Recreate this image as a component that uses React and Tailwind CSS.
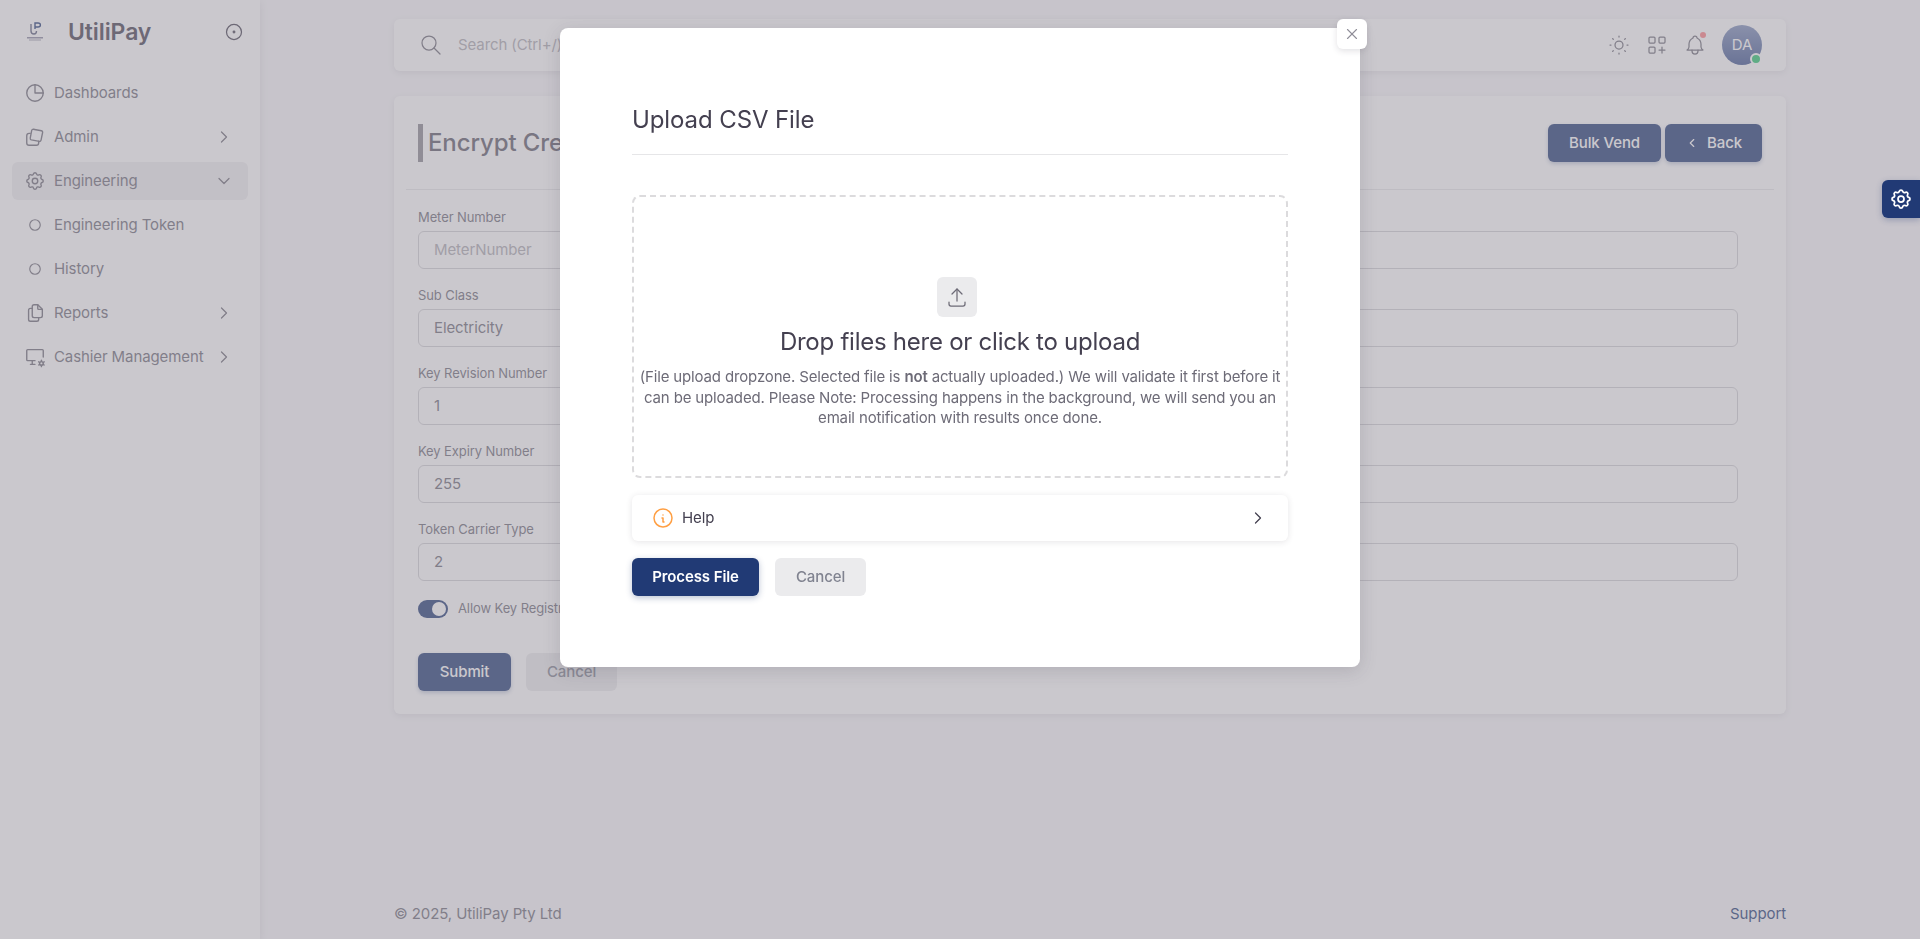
import React from "react";
import {
  TbChartPie2, TbSettings, TbFiles, TbDeviceDesktopCog, TbCircleDot, TbChevronRight, TbChevronDown, TbCircle,
  TbSearch, TbSun, TbLayoutGridAdd, TbBell, TbUpload, TbInfoCircle, TbX, TbChevronLeft,
} from "react-icons/tb";

const AdminIcon = ({ className }) => (
  <svg className={className} viewBox="0 0 24 24" fill="none" stroke="currentColor" strokeWidth="1.5" strokeLinecap="round" strokeLinejoin="round">
    <path d="M10 3.5l9 1.7c.9.2 1.5 1 1.3 1.9l-1.7 8.4c-.2.9-1 1.5-1.9 1.3l-8.6-1.6c-.9-.2-1.5-1-1.3-1.9l1.6-8.5c.2-.9 1.1-1.5 2.6-1.3z" />
    <path d="M6.8 8H5.5C4.1 8 3 9.1 3 10.5v8C3 19.9 4.1 21 5.5 21h8c1.4 0 2.5-1.1 2.5-2.5v-1.8" />
  </svg>
);

const Logo = () => (
  <svg className="w-[18px] h-[20px]" viewBox="0 0 18 20" fill="none">
    <path d="M5 2v7c0 2 1 3 3 3s2.5-1 2.5-3" stroke="#5a5f7d" strokeWidth="1.4" />
    <path d="M9 7V1h3c1.6 0 2.4 1 2.4 2s-.8 2-2.4 2H9" stroke="#213a75" strokeWidth="1.4" />
    <rect x="1" y="15" width="16" height="1.5" fill="#8a89a0" />
    <rect x="3" y="17.5" width="12" height="1" fill="#a09fb0" />
  </svg>
);

const menu = [
  { label: "Dashboards", Icon: TbChartPie2 },
  { label: "Admin", Icon: AdminIcon, arrow: "right" },
  { label: "Engineering", Icon: TbSettings, arrow: "down", active: true },
  { label: "Engineering Token", sub: true },
  { label: "History", sub: true },
  { label: "Reports", Icon: TbFiles, arrow: "right" },
  { label: "Cashier Management", Icon: TbDeviceDesktopCog, arrow: "right" },
];

const fields = [
  { label: "Meter Number", placeholder: "MeterNumber" },
  { label: "Sub Class", value: "Electricity" },
  { label: "Key Revision Number", value: "1" },
  { label: "Key Expiry Number", value: "255" },
  { label: "Token Carrier Type", value: "2" },
];

const Sidebar = () => (
  <aside className="w-[260px] shrink-0 bg-white shadow-[0_2px_8px_rgba(47,43,61,0.12)] h-full">
    <div className="flex items-center h-[64px] pl-[26px] pr-[16px]">
      <Logo />
      <span className="ml-[24px] text-[23px] font-semibold text-[#444050] flex-1">UtiliPay</span>
      <TbCircleDot className="w-[20px] h-[20px] text-[#444050]" strokeWidth={1.5} />
    </div>
    <nav className="flex flex-col gap-[6px] px-[12px] pt-[10px]">
      {menu.map(({ label, Icon, arrow, active, sub }) => (
        <div key={label} className={`flex items-center h-[38px] rounded-md pl-[14px] pr-[14px] text-[15px] text-[#6d6b77] ${active ? "bg-[#efeef0]" : ""}`}>
          <span className="w-[18px] flex justify-center mr-[10px]">
            {sub ? <TbCircle className="w-[14px] h-[14px]" /> : <Icon className="w-[22px] h-[22px] shrink-0" strokeWidth={1.5} />}
          </span>
          <span className="flex-1 whitespace-nowrap">{label}</span>
          {arrow === "right" && <TbChevronRight className="w-[20px] h-[20px]" strokeWidth={1.5} />}
          {arrow === "down" && <TbChevronDown className="w-[20px] h-[20px]" strokeWidth={1.5} />}
        </div>
      ))}
    </nav>
  </aside>
);

const Topbar = () => (
  <header className="h-[52px] rounded-md bg-white shadow-[0_2px_6px_rgba(47,43,61,0.1)] flex items-center pl-[25px] pr-[24px]">
    <TbSearch className="w-[24px] h-[24px] text-[#6d6b77]" strokeWidth={1.25} />
    <span className="ml-[15px] text-[15px] text-[#acaab1] flex-1">Search (Ctrl+/)</span>
    <TbSun className="w-[24px] h-[24px] text-[#6d6b77] mr-[14px]" strokeWidth={1.25} />
    <TbLayoutGridAdd className="w-[24px] h-[24px] text-[#6d6b77] mr-[14px]" strokeWidth={1.25} />
    <span className="relative mr-[15px]">
      <TbBell className="w-[24px] h-[24px] text-[#6d6b77]" strokeWidth={1.25} />
      <span className="absolute -top-[1px] right-[1px] w-[6px] h-[6px] rounded-full bg-[#ff4c51]/70" />
    </span>
    <span className="relative w-[40px] h-[40px] rounded-full bg-gradient-to-b from-[#7f90ba] to-[#3f5590] text-white text-[15px] flex items-center justify-center">
      DA
      <span className="absolute bottom-0 right-0 w-[12px] h-[12px] rounded-full bg-[#28c76f] border-2 border-white" />
    </span>
  </header>
);

const Field = ({ label, placeholder, value }) => (
  <div>
    <label className="block text-[13px] leading-[18px] h-[18px] text-[#6d6b77] mb-[5px]">{label}</label>
    <div className={`h-[38px] rounded-md border border-[#d1d0d4] px-[15px] flex items-center text-[15px] ${value ? "text-[#6d6b77]" : "text-[#acaab1]"}`}>
      {value || placeholder}
    </div>
  </div>
);

const FormCard = () => (
  <section className="mt-[25px] h-[618px] rounded-md bg-white shadow-[0_2px_6px_rgba(47,43,61,0.1)]">
    <div className="mx-[12px] h-[94px] border-b border-[#e6e6e8] pl-[12px] pr-[12px] flex items-start pt-[28px]">
      <h1 className="border-l-[5px] border-[#8a8890] pl-[5px] h-[38px] flex-1 text-[24px] leading-[38px] font-medium text-[#5d5a68]">Encrypt Credit Token</h1>
      <button className="h-[38px] w-[113px] rounded-md bg-[#213a75] text-white text-[15px] font-medium shadow-[0_2px_4px_rgba(33,58,117,0.3)]">Bulk Vend</button>
      <button className="ml-[4px] h-[38px] w-[97px] rounded-md bg-[#213a75] text-white text-[15px] font-medium flex items-center justify-center gap-[8px] shadow-[0_2px_4px_rgba(33,58,117,0.3)]">
        <TbChevronLeft className="w-[14px] h-[14px]" />Back
      </button>
    </div>
    <div className="pl-[24px] pr-[48px] pt-[18px]">
      <div className="grid grid-cols-2 gap-x-[24px] gap-y-[17px]">
        {fields.map((f) => (
          <React.Fragment key={f.label}>
            <Field {...f} />
            <Field label="" value=" " />
          </React.Fragment>
        ))}
      </div>
      <div className="flex items-center mt-[19px] h-[18px]">
        <span className="w-[30px] h-[18px] rounded-full bg-[#213a75] flex items-center justify-end pr-[2px]">
          <span className="w-[14px] h-[14px] rounded-full bg-white" />
        </span>
        <span className="ml-[10px] text-[13px] text-[#6d6b77]">Allow Key Registration</span>
      </div>
      <div className="flex gap-[15px] mt-[35px]">
        <button className="h-[38px] w-[93px] rounded-md bg-[#213a75] text-white text-[15px] font-medium shadow-[0_2px_4px_rgba(33,58,117,0.3)]">Submit</button>
        <button className="h-[38px] w-[91px] rounded-md bg-[#ebebed] text-[#808390] text-[15px] font-medium">Cancel</button>
      </div>
    </div>
  </section>
);

const UploadModal = () => (
  <div className="fixed inset-0 bg-[#96929b]/50 backdrop-blur-[0.65px] flex justify-center items-start pt-[28px]">
    <div className="relative w-[800px] h-[639px] bg-white rounded-lg shadow-[0_4px_18px_rgba(47,43,61,0.16)] px-[72px] pt-[72px]">
      <button className="absolute -top-[9px] -right-[7px] w-[30px] h-[30px] bg-white rounded-md shadow-[0_2px_6px_rgba(47,43,61,0.14)] flex items-center justify-center text-[#8f8e98]">
        <TbX className="w-[18px] h-[18px]" strokeWidth={1.5} />
      </button>
      <h2 className="h-[55px] text-[24px] leading-[40px] font-normal text-[#444050] border-b border-[#e6e6e8]">Upload CSV File</h2>
      <div className="mt-[40px] h-[283px] rounded-lg border-2 border-dashed border-[#dcdbdd] flex flex-col items-center pt-[80px] text-center">
        <span className="w-[40px] h-[40px] -ml-[6px] rounded-md bg-[#ebebed] flex items-center justify-center text-[#6d6b77]">
          <TbUpload className="w-[24px] h-[24px]" strokeWidth={1.25} />
        </span>
        <h3 className="mt-[10px] text-[24px] leading-[30px] text-[#444050] tracking-[-0.25px]">Drop files here or click to upload</h3>
        <p className="mt-[10px] w-[645px] text-[15px] leading-[20.5px] text-[#6d6b77] tracking-[-0.15px]">
          (File upload dropzone. Selected file is <span className="font-semibold">not</span> actually uploaded.) We will validate it first before it can be uploaded. Please Note: Processing happens in the background, we will send you an email notification with results once done.
        </p>
      </div>
      <div className="mt-[17px] h-[46px] rounded-md bg-white shadow-[0_1px_6px_rgba(47,43,61,0.12)] flex items-center pl-[19px] pr-[20px]">
        <TbInfoCircle className="w-[24px] h-[24px] text-[#ff9f43]" strokeWidth={1.5} />
        <span className="ml-[7px] flex-1 text-[15px] text-[#444050]">Help</span>
        <TbChevronRight className="w-[20px] h-[20px] text-[#444050]" strokeWidth={1.5} />
      </div>
      <div className="flex gap-[16px] mt-[17px]">
        <button className="h-[38px] w-[127px] rounded-md bg-[#213a75] text-white text-[15px] font-semibold shadow-[0_2px_6px_rgba(33,58,117,0.3)]">Process File</button>
        <button className="h-[38px] w-[91px] rounded-md bg-[#ebebed] text-[#808390] text-[15px] font-medium">Cancel</button>
      </div>
    </div>
  </div>
);

export default function App() {
  return (
    <div className="h-[939px] overflow-hidden flex bg-[#f8f7fa] tracking-[-0.1px] font-['Inter','Noto_Sans',sans-serif]">
      <Sidebar />
      <main className="flex-1 flex flex-col pl-[134px] pr-[134px] pt-[19px]">
        <Topbar />
        <FormCard />
        <footer className="mt-auto mb-[14px] flex justify-between text-[15px] text-[#6d6b77]">
          <span>© 2025, UtiliPay Pty Ltd</span>
          <span className="text-[#213a75]">Support</span>
        </footer>
      </main>
      <UploadModal />
      <button className="fixed right-0 top-[180px] w-[38px] h-[38px] rounded-l-md bg-[#213a75] flex items-center justify-center text-white shadow-[0_2px_6px_rgba(33,58,117,0.3)]">
        <TbSettings className="w-[24px] h-[24px]" strokeWidth={1.75} />
      </button>
    </div>
  );
}
